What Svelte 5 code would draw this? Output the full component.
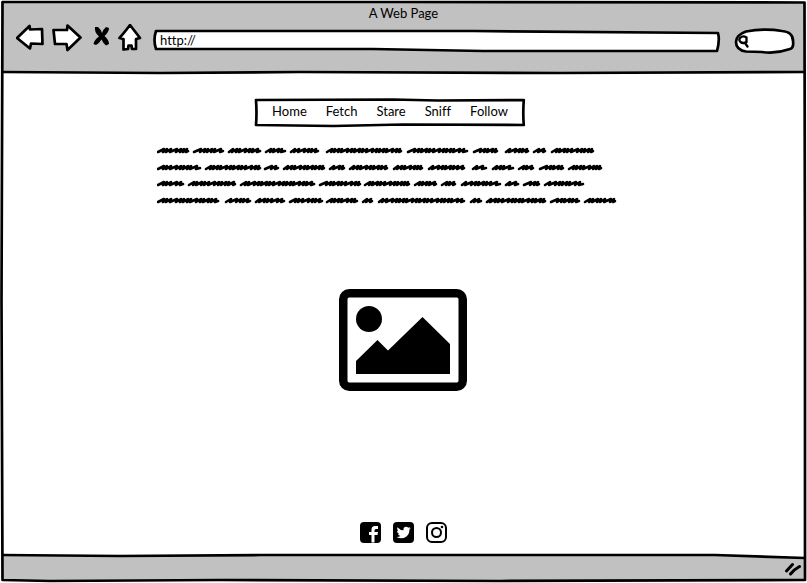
<script>
  const links = ['Home', 'Fetch', 'Stare', 'Sniff', 'Follow'];

  // Start and end of every scribbled word, line by line.
  const lines = [
    { y: 6, words: [[0, 32], [36, 67], [71, 104], [108, 129], [133, 162], [169, 245], [250, 311], [316, 341], [348, 372], [376, 389], [394, 437]] },
    { y: 23, words: [[0, 44], [48, 104], [107, 122], [126, 168], [172, 188], [192, 231], [236, 266], [271, 308], [315, 330], [335, 357], [361, 377], [382, 407], [411, 445]] },
    { y: 39, words: [[0, 27], [31, 79], [83, 158], [162, 204], [207, 253], [257, 280], [284, 299], [304, 344], [348, 362], [366, 383], [387, 427]] },
    { y: 56, words: [[0, 62], [68, 94], [98, 128], [132, 166], [169, 201], [205, 216], [221, 308], [313, 325], [329, 389], [393, 423], [427, 459]] }
  ];
  const steps = [5, 3, 4, 6, 4, 3, 4, 3, 6, 4, 3];

  function scribble(from, to, y) {
    let x = from + 1;
    let i = from % steps.length;
    let d = `M${x} ${y + 1}`;
    while (x + 4 < to - 1) {
      const step = steps[i % steps.length];
      const top = Math.min(x + step + 1, to - 2);
      d += `L${top} ${y - 2}L${Math.min(x + step, to - 3)} ${y + 1}`;
      x += step;
      i += 1;
    }
    return d + `L${to - 1} ${y}`;
  }
</script>

<div class="window">
  <header>
    <svg class="edge" viewBox="0 0 807 74" preserveAspectRatio="none" aria-hidden="true">
      <path d="M2 2L400 2L805 3V72L560 73L300 72L160 73L2 72Z" fill="#c1c1c1" />
      <path class="line" d="M2 72L160 73L300 72L560 73L805 72" />
    </svg>
    <h1>A Web Page</h1>
    <div class="toolbar">
      <div class="buttons">
        <button aria-label="Back">
          <svg width="28" height="28" viewBox="0 0 28 28"><path class="shape" d="M1 14L13.500 2L14 5.500L26 5L26.500 20L15 19.500L14 24.500Z" /></svg>
        </button>
        <button class="forward" aria-label="Forward">
          <svg width="30" height="28" viewBox="0 0 30 28"><path class="shape" d="M1.500 6L15 6L15.500 1.500L28.500 13.500L15.500 26L14.500 20L3 20Z" /></svg>
        </button>
        <button class="stop" aria-label="Stop">
          <svg width="18" height="28" viewBox="0 0 18 28"><path d="M2 3L5 3Q7.500 5 9 9Q10.500 5 13 3L16 4Q16 8 11.500 12Q16 16 16 20L13 21.500Q10 19 8.500 15.500Q6.500 19 3 21L0.500 20Q1 16 6 12.500Q1 8 2 3Z" /></svg>
        </button>
        <button class="home" aria-label="Home page">
          <svg width="24" height="28" viewBox="0 0 24 28"><path class="shape" d="M12 1L22 14L18 15L18 25L14 25L13.500 21.500L10.500 21.500L10 25L5.500 25.500L5.500 15L1.500 14Q6 9 12 1Z" /></svg>
        </button>
      </div>
      <div class="address">
        <svg class="edge" viewBox="0 0 567 22" preserveAspectRatio="none" aria-hidden="true">
          <path class="shape" d="M3 1L320 1L565 3Q567 10 564 21L330 21L220 19L3 19Q0 10 3 1Z" />
        </svg>
        <input type="text" aria-label="Address" value="http://" />
      </div>
      <div class="search">
        <svg class="edge" viewBox="0 0 61 26" preserveAspectRatio="none" aria-hidden="true">
          <path class="shape" d="M12 3.500Q31 0 48 3Q59 4 59 13Q60 20 56 21Q42 26 28 24L12 23.500Q2 22 2 14Q2 7 12 3.500Z" />
        </svg>
        <svg class="glass" width="12" height="14" viewBox="0 0 12 14" aria-hidden="true"><path d="M2 4Q5 1 8.500 3.500L8.500 8Q5 10 2.500 8Q0.500 6 2 4M7 9L9.500 12.500" fill="none" stroke="#000" stroke-width="2.300" stroke-linecap="round" /></svg>
        <input type="search" aria-label="Search" />
      </div>
    </div>
  </header>

  <main>
    <div class="intro">
      <nav>
        <svg class="edge" viewBox="0 0 274 30" preserveAspectRatio="none" aria-hidden="true">
          <path class="line" d="M2 2L140 1.500L185 2.500L272 2Q271 15 272 27L150 26.500L80 28L2 27Q3 15 2 2Z" />
        </svg>
        {#each links as link}
          <a href="#{link.toLowerCase()}">{link}</a>
        {/each}
      </nav>
      <svg class="copy" viewBox="0 0 466 64" role="img" aria-label="Placeholder paragraph">
        {#each lines as line}
          {#each line.words as [from, to]}
            <path d={scribble(from, to, line.y)} />
          {/each}
        {/each}
      </svg>
    </div>

    <svg class="picture" viewBox="0 0 128 102" role="img" aria-label="Placeholder picture">
      <rect x="4.250" y="4.250" width="119.500" height="93.500" rx="6" fill="none" stroke="#000" stroke-width="8.500" />
      <circle cx="30" cy="30" r="13" />
      <path d="M17 72L38.500 51L49 61.500L83.500 28L111 55V85H17Z" />
    </svg>

    <div class="social">
      <a href="#facebook" aria-label="Facebook">
        <svg width="21" height="21" viewBox="0 0 21 21"><rect width="21" height="21" rx="4" /><path fill="#fff" d="M11.500 20.500V13H9V10H11.500V7.500Q11.500 4 15 4H18V7H16Q14.500 7 14.500 8.500V10H18L17.500 13H14.500V20.500Z" /></svg>
      </a>
      <a href="#twitter" aria-label="Twitter">
        <svg width="21" height="21" viewBox="0 0 21 21"><rect width="21" height="21" rx="4" /><path fill="#fff" d="M3.500 15Q6 15 7.500 14Q5.500 13.500 5 12H6.200Q4 11 4 8.800L5.200 9.100Q3.300 7.500 4.500 5.200Q7 8.200 10.500 8.300Q10 5 13.200 4.800Q14.500 4.800 15.300 5.700L17.300 5L16.200 6.600L17.800 6.300L16.400 7.800Q16.500 12.500 12.800 15Q8.500 17.700 3.500 15Z" /></svg>
      </a>
      <a href="#instagram" aria-label="Instagram">
        <svg width="21" height="21" viewBox="0 0 21 21" fill="none" stroke="#000" stroke-width="2"><rect x="1" y="1" width="19" height="19" rx="5" /><circle cx="10.500" cy="10.500" r="4.500" /><circle cx="16" cy="5" r="1.300" fill="#000" stroke="none" /></svg>
      </a>
    </div>
  </main>

  <footer>
    <svg class="edge" viewBox="0 0 807 29" preserveAspectRatio="none" aria-hidden="true">
      <path d="M2 1L215 2L400 1L715 1L805 4V27H2Z" fill="#c1c1c1" />
      <path class="line" d="M2 1L120 2L260 1L715 1L805 4" />
    </svg>
    <svg class="grip" width="18" height="14" viewBox="0 0 18 14" aria-hidden="true"><path d="M2.500 9L8.500 2.500M6.500 12Q10 7.500 15.500 4.500" fill="none" stroke="#000" stroke-width="3" stroke-linecap="round" /></svg>
  </footer>

  <svg class="edge frame" viewBox="0 0 807 583" preserveAspectRatio="none" aria-hidden="true">
    <path class="line" d="M2.500 2L400 2L804.500 2.500L805 300L805 580L500 581L220 580L50 581L2.500 580L1.500 300Z" />
  </svg>
</div>

<style>
  :global(body) { margin: 0; background: #fff; }
  .window {
    position: relative;
    display: flex;
    flex-direction: column;
    min-height: 100vh;
    font: 13px/16px Lato, "Liberation Sans", sans-serif;
    font-variant-ligatures: none;
    color: #000;
  }
  .edge { position: absolute; inset: 0; width: 100%; height: 100%; overflow: visible; pointer-events: none; }
  .line, .shape { fill: none; stroke: #000; stroke-width: 2.7px; stroke-linejoin: round; vector-effect: non-scaling-stroke; }
  .shape { fill: #fff; }
  header { position: relative; box-sizing: border-box; height: 74px; padding: 5px 12px 0 16px; }
  h1 { position: relative; margin: 0; padding-right: 4px; font: inherit; text-align: center; }
  .toolbar { position: relative; display: flex; align-items: center; margin-top: 1px; }
  .buttons { display: flex; }
  button { display: block; padding: 0; border: 0; background: none; }
  button svg { display: block; }
  .forward { margin-left: 8px; }
  .stop { margin-left: 11px; }
  .home { margin-left: 7px; }
  .address { position: relative; flex: 1; height: 22px; margin: 6px 14px 0 11px; }
  .search { position: relative; display: flex; align-items: center; width: 61px; height: 26px; margin-top: 6px; }
  .glass { position: relative; flex: none; margin-left: 4px; }
  input { position: relative; box-sizing: border-box; width: 100%; min-width: 0; height: 20px; padding: 0 7px; border: 0; outline: 0; background: none; font: inherit; font-variant-ligatures: none; color: inherit; appearance: none; }
  main { flex: 1; display: flex; flex-direction: column; align-items: center; padding: 24px 17px 11px 16px; }
  .intro { display: flex; flex-direction: column; align-items: center; max-width: 100%; padding-right: 26px; }
  nav { position: relative; display: flex; gap: 19px; padding: 5px 18px 9px; }
  a { position: relative; color: inherit; text-decoration: none; }
  .copy { width: 466px; max-width: 100%; margin-top: 17px; }
  .copy path { fill: none; stroke: #000; stroke-width: 2.6px; stroke-linecap: round; stroke-linejoin: round; }
  .picture { width: 128px; margin-top: 80px; }
  .social { display: flex; gap: 12px; margin-top: auto; }
  .social svg { display: block; }
  footer { position: relative; display: flex; align-items: center; justify-content: flex-end; height: 29px; padding-right: 5px; }
  .grip { position: relative; }
</style>
